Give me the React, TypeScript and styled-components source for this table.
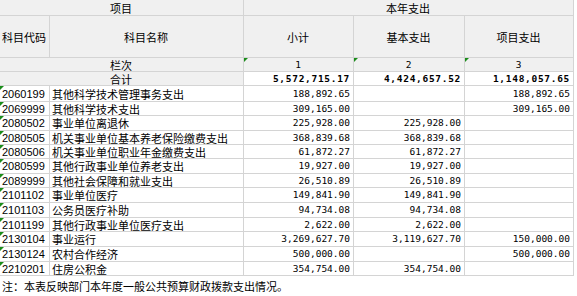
import React from 'react';
import styled, { createGlobalStyle } from 'styled-components';

const LINE = '#d4d4d4';
const HEAD_BG = '#f0f0f0';
const FLAG = '#1a8c1a';

const COLS = '50px 194px 110px 111px 109px';

const GlobalStyle = createGlobalStyle`
  html, body {
    margin: 0;
    padding: 0;
    background: #fff;
  }
  body {
    width: 577px;
    height: 296px;
    overflow: hidden;
    font-family: "Noto Sans CJK SC", sans-serif;
    color: #000;
  }
`;

const Sheet = styled.div`
  display: flex;
  flex-direction: column;
  width: 574px;
`;

const Row = styled.div<{ $h: number }>`
  display: grid;
  grid-template-columns: ${COLS};
  height: ${({ $h }) => $h}px;
`;

type Align = 'left' | 'center' | 'right';

const Cell = styled.div<{
  $span?: number;
  $align?: Align;
  $head?: boolean;
  $flag?: boolean;
}>`
  position: relative;
  box-sizing: border-box;
  min-width: 0;
  grid-column: span ${({ $span }) => $span || 1};
  display: flex;
  align-items: center;
  justify-content: ${({ $align }) =>
    $align === 'right' ? 'flex-end' : $align === 'center' ? 'center' : 'flex-start'};
  padding: 0 3px 0 2px;
  border-right: 1px solid ${LINE};
  border-bottom: 1px solid ${LINE};
  background: ${({ $head }) => ($head ? HEAD_BG : '#fff')};
  font-size: 11px;
  line-height: 12px;
  white-space: nowrap;

  ${({ $flag }) =>
    $flag &&
    `
    &::before {
      content: '';
      position: absolute;
      left: 0;
      top: 0;
      border-top: 4px solid ${FLAG};
      border-right: 4px solid transparent;
    }
  `}
`;

const Code = styled.span`
  font-family: "Liberation Sans", Arial, sans-serif;
  font-size: 11px;
`;

const Num = styled.span<{ $bold?: boolean }>`
  font-family: "DejaVu Sans Mono", monospace;
  font-size: 9.5px;
  font-weight: ${({ $bold }) => ($bold ? 700 : 400)};
  letter-spacing: ${({ $bold }) => ($bold ? '0.7px' : '0')};
`;

const Note = styled.div`
  padding: 3px 0 0 2px;
  font-size: 11px;
  line-height: 14px;
  white-space: nowrap;
`;

const rows: [string, string, string, string, string, number][] = [
  ['2060199', '其他科学技术管理事务支出', '188,892.65', '', '188,892.65', 16],
  ['2069999', '其他科学技术支出', '309,165.00', '', '309,165.00', 14],
  ['2080502', '事业单位离退休', '225,928.00', '225,928.00', '', 15],
  ['2080505', '机关事业单位基本养老保险缴费支出', '368,839.68', '368,839.68', '', 14],
  ['2080506', '机关事业单位职业年金缴费支出', '61,872.27', '61,872.27', '', 14],
  ['2080599', '其他行政事业单位养老支出', '19,927.00', '19,927.00', '', 15],
  ['2089999', '其他社会保障和就业支出', '26,510.89', '26,510.89', '', 14],
  ['2101102', '事业单位医疗', '149,841.90', '149,841.90', '', 15],
  ['2101103', '公务员医疗补助', '94,734.08', '94,734.08', '', 15],
  ['2101199', '其他行政事业单位医疗支出', '2,622.00', '2,622.00', '', 14],
  ['2130104', '事业运行', '3,269,627.70', '3,119,627.70', '150,000.00', 15],
  ['2130124', '农村合作经济', '500,000.00', '', '500,000.00', 15],
  ['2210201', '住房公积金', '354,754.00', '354,754.00', '', 14],
];

const App = () => (
  <>
    <GlobalStyle />
    <Sheet>
      <Row $h={16}>
        <Cell $head $span={2} $align="center">项目</Cell>
        <Cell $head $span={3} $align="center">本年支出</Cell>
      </Row>
      <Row $h={42}>
        <Cell $head>科目代码</Cell>
        <Cell $head $align="center">科目名称</Cell>
        <Cell $head $align="center">小计</Cell>
        <Cell $head $align="center">基本支出</Cell>
        <Cell $head $align="center">项目支出</Cell>
      </Row>
      <Row $h={14}>
        <Cell $head $span={2} $align="center">栏次</Cell>
        <Cell $head $flag $align="center"><Num>1</Num></Cell>
        <Cell $head $flag $align="center"><Num>2</Num></Cell>
        <Cell $head $flag $align="center"><Num>3</Num></Cell>
      </Row>
      <Row $h={14}>
        <Cell $head $span={2} $align="center">合计</Cell>
        <Cell $align="right"><Num $bold>5,572,715.17</Num></Cell>
        <Cell $align="right"><Num $bold>4,424,657.52</Num></Cell>
        <Cell $align="right"><Num $bold>1,148,057.65</Num></Cell>
      </Row>
      {rows.map(([code, name, total, basic, project, h]) => (
        <Row key={code} $h={h}>
          <Cell $flag><Code>{code}</Code></Cell>
          <Cell>{name}</Cell>
          <Cell $align="right"><Num>{total}</Num></Cell>
          <Cell $align="right"><Num>{basic}</Num></Cell>
          <Cell $align="right"><Num>{project}</Num></Cell>
        </Row>
      ))}
      <Note>注：本表反映部门本年度一般公共预算财政拨款支出情况。</Note>
    </Sheet>
  </>
);

export default App;
